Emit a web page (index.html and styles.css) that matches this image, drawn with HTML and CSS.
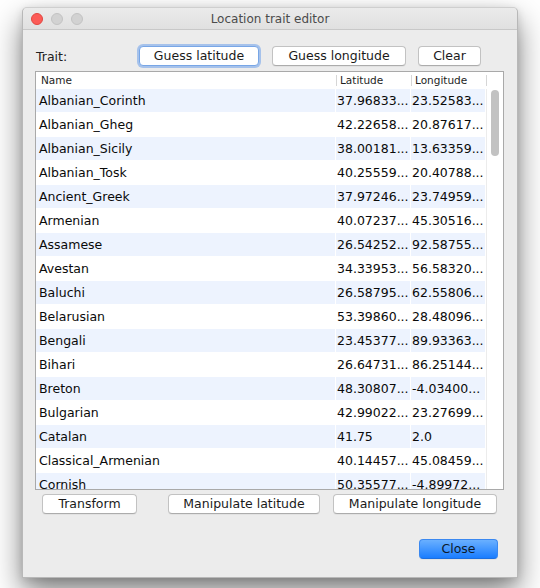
FILE: index.html
```html
<!DOCTYPE html>
<html>
<head>
<meta charset="utf-8">
<link rel="stylesheet" href="styles.css">
</head>
<body>
<div class="window">
  <div class="titlebar">
    <div class="lights"><span class="light red"></span><span class="light gray"></span><span class="light gray"></span></div>
    <div class="title">Location trait editor</div>
    <div></div>
  </div>
  <div class="content">
    <div class="toprow">
      <span class="label">Trait:</span>
      <button class="btn focused b-glat">Guess latitude</button>
      <button class="btn b-glon">Guess longitude</button>
      <button class="btn b-clear">Clear</button>
    </div>
    <div class="table">
      <div class="thead">
        <div class="th">Name</div>
        <div class="th sep">Latitude</div>
        <div class="th sep">Longitude</div>
        <div class="th sep"></div>
      </div>
      <div class="tbody">
        <div class="rows">
          <div class="row"><div class="cell">Albanian_Corinth</div><div class="cell num">37.96833...</div><div class="cell num">23.52583...</div></div>
          <div class="row"><div class="cell">Albanian_Gheg</div><div class="cell num">42.22658...</div><div class="cell num">20.87617...</div></div>
          <div class="row"><div class="cell">Albanian_Sicily</div><div class="cell num">38.00181...</div><div class="cell num">13.63359...</div></div>
          <div class="row"><div class="cell">Albanian_Tosk</div><div class="cell num">40.25559...</div><div class="cell num">20.40788...</div></div>
          <div class="row"><div class="cell">Ancient_Greek</div><div class="cell num">37.97246...</div><div class="cell num">23.74959...</div></div>
          <div class="row"><div class="cell">Armenian</div><div class="cell num">40.07237...</div><div class="cell num">45.30516...</div></div>
          <div class="row"><div class="cell">Assamese</div><div class="cell num">26.54252...</div><div class="cell num">92.58755...</div></div>
          <div class="row"><div class="cell">Avestan</div><div class="cell num">34.33953...</div><div class="cell num">56.58320...</div></div>
          <div class="row"><div class="cell">Baluchi</div><div class="cell num">26.58795...</div><div class="cell num">62.55806...</div></div>
          <div class="row"><div class="cell">Belarusian</div><div class="cell num">53.39860...</div><div class="cell num">28.48096...</div></div>
          <div class="row"><div class="cell">Bengali</div><div class="cell num">23.45377...</div><div class="cell num">89.93363...</div></div>
          <div class="row"><div class="cell">Bihari</div><div class="cell num">26.64731...</div><div class="cell num">86.25144...</div></div>
          <div class="row"><div class="cell">Breton</div><div class="cell num">48.30807...</div><div class="cell num">-4.03400...</div></div>
          <div class="row"><div class="cell">Bulgarian</div><div class="cell num">42.99022...</div><div class="cell num">23.27699...</div></div>
          <div class="row"><div class="cell">Catalan</div><div class="cell num">41.75</div><div class="cell num">2.0</div></div>
          <div class="row"><div class="cell">Classical_Armenian</div><div class="cell num">40.14457...</div><div class="cell num">45.08459...</div></div>
          <div class="row"><div class="cell">Cornish</div><div class="cell num">50.35577...</div><div class="cell num">-4.89972...</div></div>
        </div>
        <div class="vscroll"><div class="thumb"></div></div>
      </div>
    </div>
    <div class="bottomrow">
      <button class="btn b-transform">Transform</button>
      <button class="btn b-mlat">Manipulate latitude</button>
      <button class="btn b-mlon">Manipulate longitude</button>
    </div>
    <div class="closerow">
      <button class="btn default b-close">Close</button>
    </div>
  </div>
</div>
</body>
</html>
```
FILE: styles.css
```css
html, body {
  margin: 0;
  padding: 0;
}
body {
  background: #ffffff;
  width: 540px;
  height: 588px;
  overflow: hidden;
  font-family: "DejaVu Sans", "Liberation Sans", sans-serif;
  padding-top: 7px;
  box-sizing: border-box;
}
.window {
  margin-left: 22px;
  width: 496px;
  height: 571px;
  box-sizing: border-box;
  background: #ececec;
  border: 1px solid rgba(0, 0, 0, 0.22);
  border-top-color: rgba(0, 0, 0, 0.12);
  border-radius: 5px 5px 0 0;
  box-shadow: 0 14px 30px rgba(0, 0, 0, 0.5), 0 2px 8px rgba(0, 0, 0, 0.12);
  display: flex;
  flex-direction: column;
}
.titlebar {
  height: 21px;
  border-bottom: 1px solid #c8c8c8;
  background: linear-gradient(#ebebeb, #e0e0e0);
  border-radius: 5px 5px 0 0;
  display: grid;
  grid-template-columns: 1fr auto 1fr;
  align-items: center;
}
.lights {
  display: flex;
  gap: 8px;
  padding-left: 8px;
  align-items: center;
}
.light {
  width: 12px;
  height: 12px;
  border-radius: 50%;
  box-sizing: border-box;
}
.light.red {
  background: #fc5b57;
  border: 1px solid #e2463f;
}
.light.gray {
  background: #d2d2d2;
  border: 1px solid #c3c3c3;
}
.title {
  font-size: 12px;
  color: #4b4b4b;
}
.content {
  padding: 0 13px 0 12px;
  display: flex;
  flex-direction: column;
}
.toprow {
  margin-top: 16px;
  height: 20px;
  display: flex;
  align-items: center;
}
.label {
  flex: 0 0 104px;
  padding-left: 1px;
  box-sizing: border-box;
  font-size: 12.5px;
  color: #222;
}
.btn {
  height: 20px;
  box-sizing: border-box;
  padding: 0;
  margin: 0;
  font-family: "DejaVu Sans", "Liberation Sans", sans-serif;
  font-size: 12.5px;
  color: #1a1a1a;
  background: #ffffff;
  border: 1px solid #c2c2c2;
  border-bottom-color: #acacac;
  border-radius: 4px;
  box-shadow: 0 1px 0 rgba(0, 0, 0, 0.04);
  line-height: 18px;
  text-align: center;
}
.btn.focused {
  border-color: #78a6e6;
  box-shadow: 0 0 0 2px rgba(110, 160, 235, 0.55);
}
.b-glat { width: 120px; }
.b-glon { width: 134px; margin-left: 13px; }
.b-clear { width: 63px; margin-left: 12px; }

.table {
  margin-top: 5px;
  width: 469px;
  height: 419px;
  box-sizing: border-box;
  border: 1px solid #a9a9a9;
  background: #ffffff;
  display: flex;
  flex-direction: column;
}
.thead {
  height: 17px;
  flex: 0 0 17px;
  display: grid;
  grid-template-columns: 300px 75px 75px 17px;
  background: #ffffff;
}
.th {
  font-size: 10.5px;
  color: #1e1e1e;
  line-height: 17px;
  padding-left: 5px;
  white-space: nowrap;
  overflow: hidden;
}
.th.sep {
  padding-left: 4px;
  background: linear-gradient(#d6d6d6, #d6d6d6) no-repeat 0 3px / 1px 11px;
}
.tbody {
  flex: 1;
  display: flex;
  overflow: hidden;
}
.rows {
  width: 450px;
  display: flex;
  flex-direction: column;
}
.row {
  flex: 0 0 24px;
  height: 24px;
  display: grid;
  grid-template-columns: 300px 75px 75px;
  background: #ffffff;
}
.row:nth-child(odd) {
  background: #edf3fe;
}
.cell {
  font-size: 12.5px;
  color: #0a0a0a;
  line-height: 23px;
  height: 23px;
  padding-left: 3px;
  border-right: 1px solid #ffffff;
  border-bottom: 1px solid #ffffff;
  white-space: nowrap;
  overflow: hidden;
}
.cell.num {
  padding-left: 1px;
}
.vscroll {
  width: 17px;
  box-sizing: border-box;
  border-left: 1px solid #ececec;
  background: #ffffff;
  padding: 1px 0 0 4px;
}
.thumb {
  width: 8px;
  height: 66px;
  border-radius: 4px;
  background: #c2c2c2;
}
.bottomrow {
  margin-top: 4px;
  height: 20px;
  display: flex;
}
.b-transform { width: 95px; margin-left: 7px; }
.b-mlat { width: 152px; margin-left: 31px; }
.b-mlon { width: 164px; margin-left: 13px; }

.closerow {
  margin-top: 25px;
  height: 20px;
  display: flex;
  justify-content: flex-end;
  padding-right: 6px;
}
.btn.default {
  width: 79px;
  color: #0c1a2c;
  background: linear-gradient(#6ab0ff, #1a7dff);
  border: 1px solid #3a88f0;
  border-bottom-color: #1c6fe0;
}
```
